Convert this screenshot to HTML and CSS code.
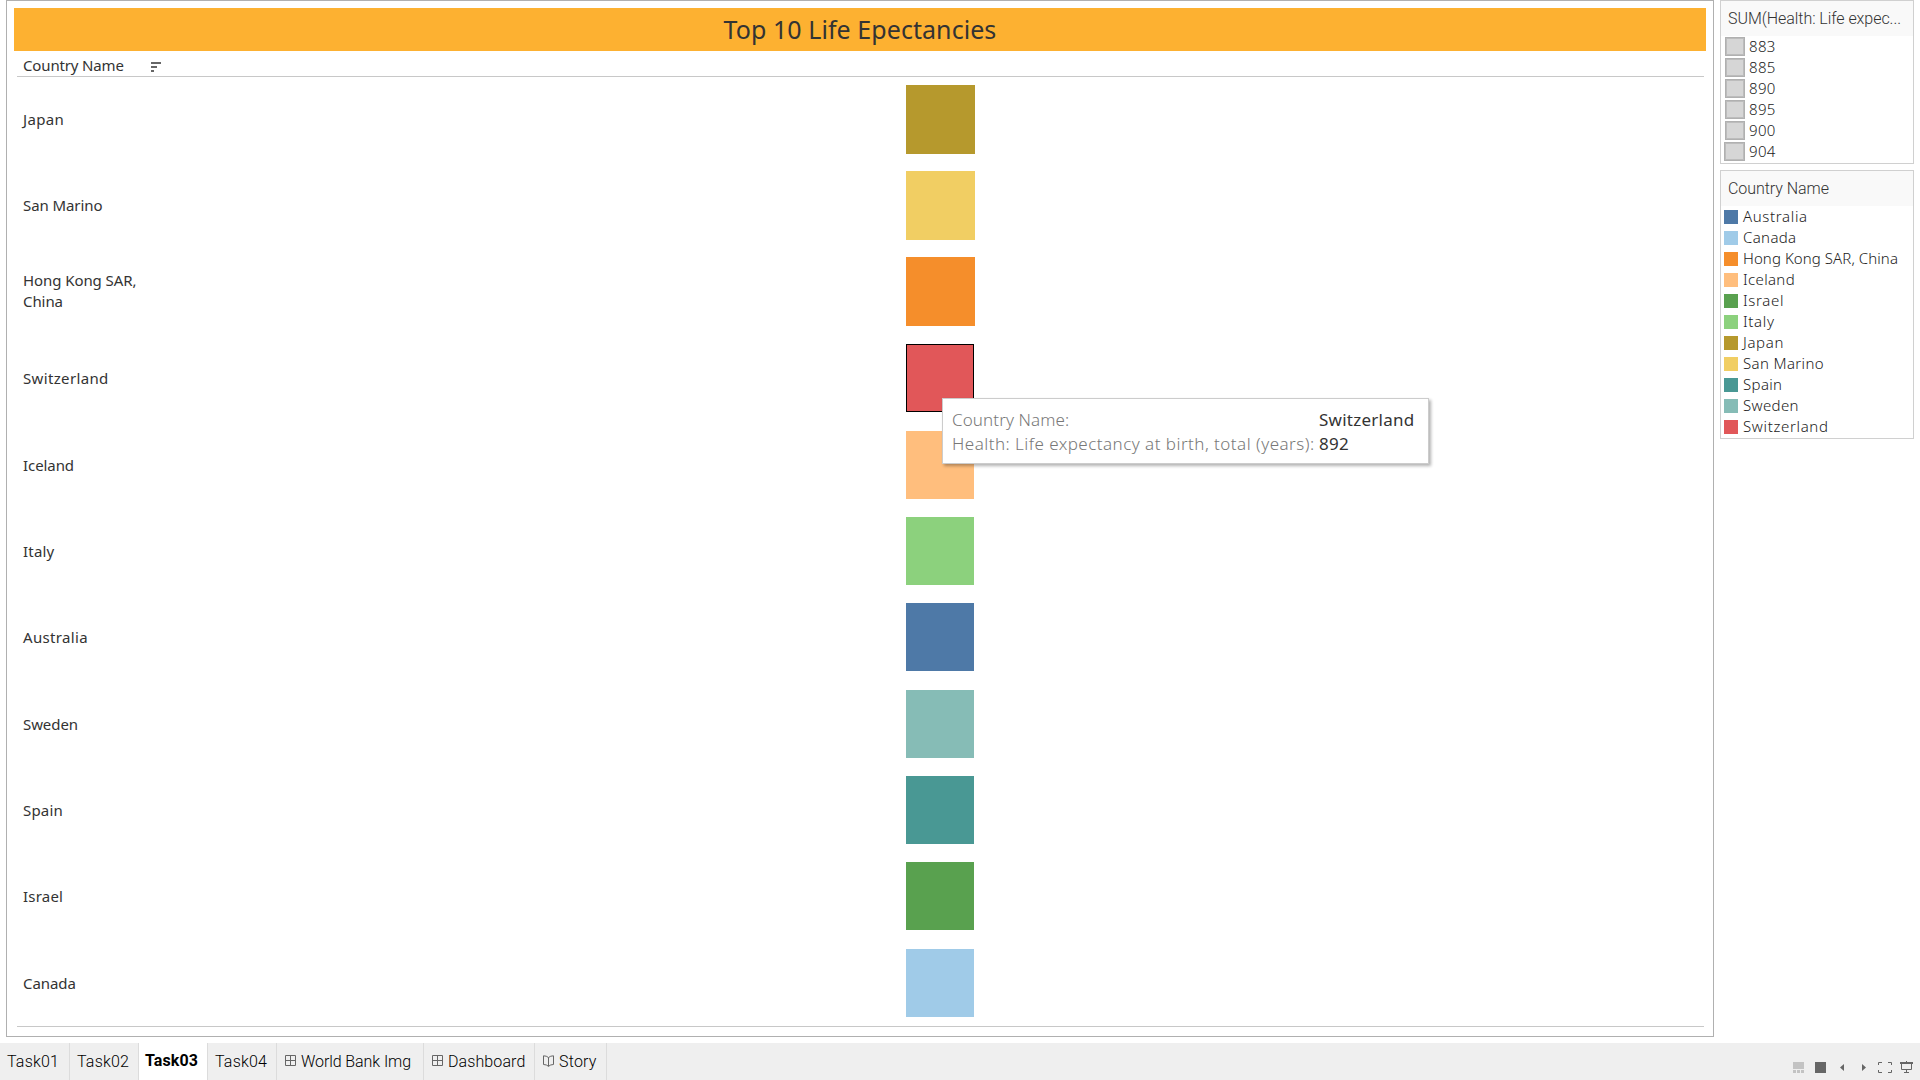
FILE: index.html
```html
<!DOCTYPE html>
<html lang="en">
<head>
<meta charset="utf-8">
<title>Top 10 Life Epectancies</title>
<link rel="stylesheet" href="styles.css">
</head>
<body>
<div class="workspace">
  <main class="sheet">
    <h1 class="title">Top 10 Life Epectancies</h1>
    <div class="column-head">
      <span class="column-name">Country Name</span>
      <svg class="sort" width="10" height="10" viewBox="0 0 10 10"><path fill="#666" d="M0 0h10v2H0zM0 4h6v2H0zM0 8h3v2H0z"/></svg>
    </div>
    <div class="rows">
      <div class="row"><span class="name wide">Japan</span><i class="mark large japan"></i></div>
      <div class="row"><span class="name snug">San Marino</span><i class="mark large san-marino"></i></div>
      <div class="row"><span class="name snug">Hong Kong SAR,<br>China</span><i class="mark large hong-kong"></i></div>
      <div class="row"><span class="name wide">Switzerland</span><i class="mark switzerland selected"></i></div>
      <div class="row"><span class="name snug">Iceland</span><i class="mark iceland"></i></div>
      <div class="row"><span class="name">Italy</span><i class="mark italy"></i></div>
      <div class="row"><span class="name wide">Australia</span><i class="mark australia"></i></div>
      <div class="row"><span class="name snug">Sweden</span><i class="mark sweden"></i></div>
      <div class="row"><span class="name">Spain</span><i class="mark spain"></i></div>
      <div class="row"><span class="name">Israel</span><i class="mark israel"></i></div>
      <div class="row"><span class="name snug">Canada</span><i class="mark canada"></i></div>
    </div>
    <div class="tooltip">
      <span class="key">Country Name:</span><b class="value">Switzerland</b>
      <span class="key spaced">Health: Life expectancy at birth, total (years):</span><b class="value">892</b>
    </div>
  </main>
  <aside class="legends">
    <section class="legend sizes">
      <h2 class="legend-title">SUM(Health: Life expec...</h2>
      <ul class="list">
        <li class="item"><i class="box"></i>883</li>
        <li class="item"><i class="box"></i>885</li>
        <li class="item"><i class="box"></i>890</li>
        <li class="item"><i class="box"></i>895</li>
        <li class="item"><i class="box"></i>900</li>
        <li class="item"><i class="box max"></i>904</li>
      </ul>
    </section>
    <section class="legend colors">
      <h2 class="legend-title">Country Name</h2>
      <ul class="list">
        <li class="item wide"><i class="chip australia"></i>Australia</li>
        <li class="item"><i class="chip canada"></i>Canada</li>
        <li class="item snug"><i class="chip hong-kong"></i>Hong Kong SAR, China</li>
        <li class="item"><i class="chip iceland"></i>Iceland</li>
        <li class="item wide"><i class="chip israel"></i>Israel</li>
        <li class="item wide"><i class="chip italy"></i>Italy</li>
        <li class="item wide"><i class="chip japan"></i>Japan</li>
        <li class="item"><i class="chip san-marino"></i>San Marino</li>
        <li class="item"><i class="chip spain"></i>Spain</li>
        <li class="item"><i class="chip sweden"></i>Sweden</li>
        <li class="item wide"><i class="chip switzerland"></i>Switzerland</li>
      </ul>
    </section>
  </aside>
</div>
<footer class="bar">
  <nav class="tabs">
    <span class="tab task">Task01</span>
    <span class="tab task">Task02</span>
    <span class="tab task active">Task03</span>
    <span class="tab task">Task04</span>
    <span class="tab world"><svg class="icon" width="11" height="11" viewBox="0 0 11 11"><path fill="none" stroke="#666" d="M.5.5h10v10H.5zM5.5.5v10M.5 5.5h10"/></svg>World Bank Img</span>
    <span class="tab dash"><svg class="icon" width="11" height="11" viewBox="0 0 11 11"><path fill="none" stroke="#666" d="M.5.5h10v10H.5zM5.5.5v10M.5 5.5h10"/></svg>Dashboard</span>
    <span class="tab story"><svg class="icon" width="11" height="12" viewBox="0 0 11 12"><path fill="none" stroke="#666" d="M.5.8Q3.5.8 5.5 2.5Q7.5.8 10.5.8V9.5Q7.5 9.5 5.5 11.300Q3.500 9.500.5 9.500zM5.500 2.500v8.800"/></svg>Story</span>
  </nav>
  <div class="tools">
    <svg width="120" height="13" viewBox="0 0 120 13">
      <path fill="#c3c3c3" d="M0 1h11v7H0zM0 9h3v3H0zM4 9h3v3H4zM8 9h3v3H8z"/>
      <path fill="#666" d="M22 1h11v11H22zM51 3v7l-4-3.500zM69 3v7l4-3.500z"/>
      <path fill="none" stroke="#666" d="M85.500 4V1.500H89M95 1.500h3.500V4M98.500 9v2.500H95M89 11.500h-3.500V9"/>
      <path fill="#666" d="M107 1h13v2h-13zM113 0h1v1h-1zM113 9h1v2h-1zM111 11h5v1h-5z"/>
      <path fill="none" stroke="#666" d="M108.500 3v5.500h10V3"/>
    </svg>
  </div>
</footer>
</body>
</html>
```
FILE: styles.css
```css
* { box-sizing: border-box; }
body {
  margin: 0;
  width: 1920px;
  height: 1080px;
  display: flex;
  flex-direction: column;
  overflow: hidden;
  background: #fff;
  color: #333;
  font: 15px "Noto Sans", sans-serif;
}
h1, h2, ul { margin: 0; padding: 0; font-weight: 400; list-style: none; }

.workspace { display: flex; height: 1043px; padding-left: 6px; }
.sheet {
  position: relative;
  width: 1708px;
  height: 1037px;
  border: 1px solid #b0b0b0;
  padding: 7px 7px 0;
}
.title {
  height: 43px;
  background: #fdb131;
  font-size: 25px;
  line-height: 43px;
  letter-spacing: .06px;
  text-align: center;
}
.column-head {
  display: flex;
  align-items: center;
  height: 26px;
  margin: 0 2px 0 3px;
  padding-left: 6px;
  border-bottom: 1px solid #c8c8c8;
}
.column-name { width: 128px; font-weight: 450; letter-spacing: -.15px; line-height: 24px; padding-top: 2px; }
.sort { margin-top: 6px; }

.rows {
  display: grid;
  grid-template-rows: 86px 86px 87px 87px 86px 86px 87px 86px 86px 87px 86px;
  height: 950px;
  margin: 0 2px 0 3px;
  border-bottom: 1px solid #c8c8c8;
}
.row { display: flex; padding: 8px 0 0 6px; }
.name {
  display: flex;
  align-items: center;
  width: 883px;
  height: 68px;
  font-weight: 450;
  line-height: 21px;
  letter-spacing: .2px;
}
.name.wide { letter-spacing: .35px; }
.name.snug { letter-spacing: -.08px; }
.mark { width: 68px; height: 68px; }
.mark.large { width: 69px; height: 69px; }
.selected { border: 1px solid #000; }

.japan { background: #b6992d; }
.san-marino { background: #f1ce63; }
.hong-kong { background: #f58e2b; }
.switzerland { background: #e15759; }
.iceland { background: #ffbe7d; }
.italy { background: #8cd17d; }
.australia { background: #4e79a7; }
.sweden { background: #86bcb6; }
.spain { background: #499894; }
.israel { background: #59a14f; }
.canada { background: #a0cbe8; }

.tooltip {
  position: absolute;
  left: 935px;
  top: 397px;
  width: 487px;
  height: 66px;
  display: grid;
  grid-template-columns: 367px auto;
  grid-template-rows: 24px 24px;
  padding: 9px 0 0 9px;
  border: 1px solid #ccc;
  background: #fff;
  box-shadow: 2px 2px 3px rgba(0, 0, 0, .3);
  font-size: 17px;
  line-height: 24px;
  white-space: nowrap;
}
.key { color: #787878; font-weight: 300; letter-spacing: .1px; }
.key.spaced { letter-spacing: .47px; }
.value { font-weight: 450; letter-spacing: .25px; }

.legends { display: flex; flex-direction: column; gap: 6px; margin-left: 6px; width: 194px; }
.legend { border: 1px solid #d0d0d0; }
.sizes { height: 164px; }
.colors { height: 269px; }
.legend-title {
  height: 35px;
  padding-left: 7px;
  background: #f9f9f9;
  font: 300 16px/36px Roboto, sans-serif;
  letter-spacing: -.05px;
  white-space: nowrap;
}
.item {
  display: flex;
  align-items: center;
  height: 21px;
  color: #222;
  font-weight: 300;
  line-height: 21px;
  letter-spacing: .35px;
  white-space: nowrap;
}
.item.wide { letter-spacing: .65px; }
.item.snug { letter-spacing: .08px; }
.box { width: 20px; height: 19px; margin: 0 4px 0 4px; border: 1px solid #b0b0b0; background: #d6d6d6; box-shadow: inset 0 0 0 1px #bcbcbc; }
.box.max { width: 21px; margin: 0 4px 0 3px; }
.chip { width: 14px; height: 14px; margin: 0 5px 0 3px; }

.bar { display: flex; justify-content: space-between; height: 37px; background: #efefef; }
.tabs { display: flex; }
.tab {
  display: flex;
  align-items: center;
  border-right: 1px solid #dcdcdc;
  color: #000;
  font: 300 16px/38px Roboto, sans-serif;
  letter-spacing: .2px;
  white-space: nowrap;
}
.task { width: 69px; padding-left: 7px; }
.task:first-child { width: 70px; }
.task.active { background: #fff; font-weight: 700; padding: 0 0 1px 6px; letter-spacing: .1px; }
.icon { margin: 0 5px 2px 0; }
.world, .dash, .story { padding-left: 8px; }
.world { width: 147px; letter-spacing: -.08px; }
.dash { width: 111px; letter-spacing: .1px; }
.story { width: 72px; }
.tools { display: flex; padding: 18px 7px 0 0; }
```
